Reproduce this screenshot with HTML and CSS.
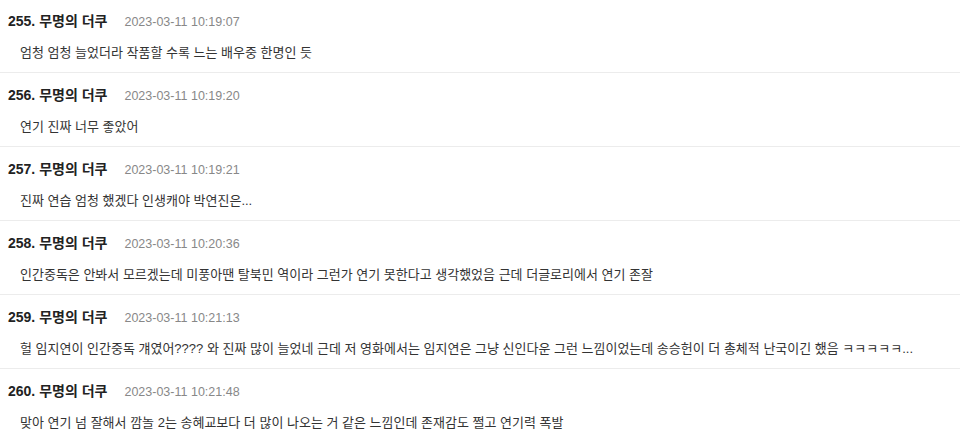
FILE: index.html
```html
<!DOCTYPE html>
<html lang="ko">
<head>
<meta charset="utf-8">
<link rel="stylesheet" href="styles.css">
</head>
<body>
<ul class="comments">
  <li class="comment">
    <div class="meta"><span class="name">255. 무명의 더쿠</span><span class="date">2023-03-11 10:19:07</span></div>
    <p class="text">엄청 엄청 늘었더라 작품할 수록 느는 배우중 한명인 듯</p>
  </li>
  <li class="comment">
    <div class="meta"><span class="name">256. 무명의 더쿠</span><span class="date">2023-03-11 10:19:20</span></div>
    <p class="text">연기 진짜 너무 좋았어</p>
  </li>
  <li class="comment">
    <div class="meta"><span class="name">257. 무명의 더쿠</span><span class="date">2023-03-11 10:19:21</span></div>
    <p class="text">진짜 연습 엄청 했겠다 인생캐야 박연진은...</p>
  </li>
  <li class="comment">
    <div class="meta"><span class="name">258. 무명의 더쿠</span><span class="date">2023-03-11 10:20:36</span></div>
    <p class="text">인간중독은 안봐서 모르겠는데 미풍아땐 탈북민 역이라 그런가 연기 못한다고 생각했었음 근데 더글로리에서 연기 존잘</p>
  </li>
  <li class="comment">
    <div class="meta"><span class="name">259. 무명의 더쿠</span><span class="date">2023-03-11 10:21:13</span></div>
    <p class="text">헐 임지연이 인간중독 걔였어???? 와 진짜 많이 늘었네 근데 저 영화에서는 임지연은 그냥 신인다운 그런 느낌이었는데 송승헌이 더 총체적 난국이긴 했음 ㅋㅋㅋㅋㅋ...</p>
  </li>
  <li class="comment">
    <div class="meta"><span class="name">260. 무명의 더쿠</span><span class="date">2023-03-11 10:21:48</span></div>
    <p class="text">맞아 연기 넘 잘해서 깜놀 2는 송혜교보다 더 많이 나오는 거 같은 느낌인데 존재감도 쩔고 연기력 폭발</p>
  </li>
</ul>
</body>
</html>
```
FILE: styles.css
```css
html, body {
  margin: 0;
  padding: 0;
  background: #fff;
}
body {
  font-family: "Liberation Sans", "Noto Sans CJK KR", sans-serif;
  color: #222;
}
.comments {
  list-style: none;
  margin: 0;
  padding: 0;
}
.comment {
  padding: 13px 8px 11px;
  height: 49px;
  border-bottom: 1px solid #ececec;
}
.comment:first-child {
  padding-top: 12px;
}
.meta {
  display: flex;
  align-items: baseline;
  gap: 17px;
  line-height: 18px;
}
.name {
  font-size: 14px;
  font-weight: bold;
  color: #222;
}
.date {
  font-size: 12.5px;
  color: #888;
}
.text {
  margin: 13px 0 0 12px;
  font-size: 13px;
  line-height: 18px;
  color: #333;
  white-space: nowrap;
}
```
